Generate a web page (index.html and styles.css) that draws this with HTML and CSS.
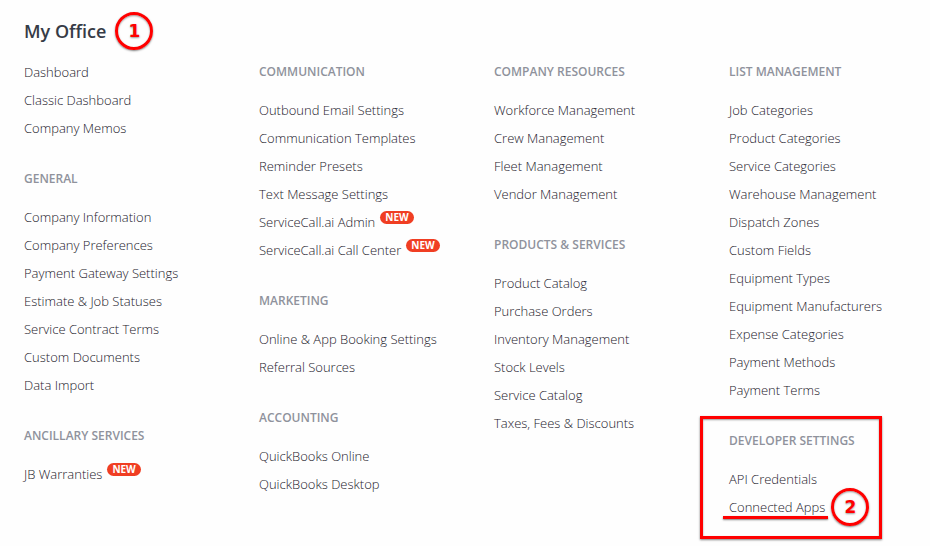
FILE: index.html
```html
<!DOCTYPE html>
<html lang="en">
<head>
  <meta charset="UTF-8">
  <title>My Office</title>
  <link rel="stylesheet" href="styles.css">
</head>
<body>
  <main class="office">
    <header class="title">
      <h1>My Office</h1>
      <span class="step">1</span>
    </header>

    <nav class="columns">
      <div class="column">
        <section class="group">
          <ul>
            <li><a href="#">Dashboard</a></li>
            <li><a href="#">Classic Dashboard</a></li>
            <li><a href="#">Company Memos</a></li>
          </ul>
        </section>
        <section class="group">
          <h2>GENERAL</h2>
          <ul>
            <li><a href="#">Company Information</a></li>
            <li><a href="#">Company Preferences</a></li>
            <li><a href="#">Payment Gateway Settings</a></li>
            <li><a href="#">Estimate &amp; Job Statuses</a></li>
            <li><a href="#">Service Contract Terms</a></li>
            <li><a href="#">Custom Documents</a></li>
            <li><a href="#">Data Import</a></li>
          </ul>
        </section>
        <section class="group">
          <h2>ANCILLARY SERVICES</h2>
          <ul>
            <li><a href="#">JB Warranties</a><span class="badge">NEW</span></li>
          </ul>
        </section>
      </div>

      <div class="column">
        <section class="group">
          <h2>COMMUNICATION</h2>
          <ul>
            <li><a href="#">Outbound Email Settings</a></li>
            <li><a href="#">Communication Templates</a></li>
            <li><a href="#">Reminder Presets</a></li>
            <li><a href="#">Text Message Settings</a></li>
            <li><a href="#">ServiceCall.ai Admin</a><span class="badge">NEW</span></li>
            <li><a href="#">ServiceCall.ai Call Center</a><span class="badge">NEW</span></li>
          </ul>
        </section>
        <section class="group">
          <h2>MARKETING</h2>
          <ul>
            <li><a href="#">Online &amp; App Booking Settings</a></li>
            <li><a href="#">Referral Sources</a></li>
          </ul>
        </section>
        <section class="group">
          <h2>ACCOUNTING</h2>
          <ul>
            <li><a href="#">QuickBooks Online</a></li>
            <li><a href="#">QuickBooks Desktop</a></li>
          </ul>
        </section>
      </div>

      <div class="column">
        <section class="group">
          <h2>COMPANY RESOURCES</h2>
          <ul>
            <li><a href="#">Workforce Management</a></li>
            <li><a href="#">Crew Management</a></li>
            <li><a href="#">Fleet Management</a></li>
            <li><a href="#">Vendor Management</a></li>
          </ul>
        </section>
        <section class="group">
          <h2>PRODUCTS &amp; SERVICES</h2>
          <ul>
            <li><a href="#">Product Catalog</a></li>
            <li><a href="#">Purchase Orders</a></li>
            <li><a href="#">Inventory Management</a></li>
            <li><a href="#">Stock Levels</a></li>
            <li><a href="#">Service Catalog</a></li>
            <li><a href="#">Taxes, Fees &amp; Discounts</a></li>
          </ul>
        </section>
      </div>

      <div class="column">
        <section class="group">
          <h2>LIST MANAGEMENT</h2>
          <ul>
            <li><a href="#">Job Categories</a></li>
            <li><a href="#">Product Categories</a></li>
            <li><a href="#">Service Categories</a></li>
            <li><a href="#">Warehouse Management</a></li>
            <li><a href="#">Dispatch Zones</a></li>
            <li><a href="#">Custom Fields</a></li>
            <li><a href="#">Equipment Types</a></li>
            <li><a href="#">Equipment Manufacturers</a></li>
            <li><a href="#">Expense Categories</a></li>
            <li><a href="#">Payment Methods</a></li>
            <li><a href="#">Payment Terms</a></li>
          </ul>
        </section>
        <section class="group framed">
          <h2>DEVELOPER SETTINGS</h2>
          <ul>
            <li><a href="#">API Credentials</a></li>
            <li class="marked"><a href="#">Connected Apps</a><span class="step">2</span></li>
          </ul>
        </section>
      </div>
    </nav>
  </main>
</body>
</html>
```
FILE: styles.css
```css
body {
  margin: 0;
  background: #fefefe;
  color: #1c202b;
  font-family: "Open Sans", sans-serif;
  font-size: 13px;
  font-weight: 300;
  line-height: 28px;
}
h1, h2, ul {
  margin: 0;
  padding: 0;
}
ul {
  list-style: none;
}
a {
  color: inherit;
  text-decoration: none;
}
.office {
  padding: 12px 24px 0;
}
.title {
  display: flex;
  align-items: center;
  gap: 9px;
  margin-bottom: 8px;
}
h1 {
  color: #363b46;
  font-size: 18px;
  font-weight: 600;
}
.columns {
  display: grid;
  grid-template-columns: repeat(4, minmax(0, 1fr));
  column-gap: 58px;
}
.group {
  margin-bottom: 23px;
}
h2 {
  margin-bottom: 10px;
  color: #8f929c;
  font-size: 12px;
  font-weight: 600;
  white-space: nowrap;
}
li {
  display: flex;
  height: 28px;
  white-space: nowrap;
}
.badge {
  height: 13px;
  margin: 3px 0 0 5px;
  padding: 0 5px;
  border-radius: 7px;
  background: #f03e23;
  color: #fff;
  font-size: 10px;
  font-weight: 700;
  line-height: 13px;
}

/* Numbered callouts */
.step {
  box-sizing: border-box;
  width: 38px;
  height: 38px;
  border: 3px solid #f00;
  border-radius: 50%;
  color: #f00;
  font-family: "DejaVu Sans", sans-serif;
  font-size: 17px;
  font-weight: 700;
  line-height: 33px;
  text-align: center;
  text-shadow: 0 1px 2px rgba(0, 0, 0, 0.4);
  box-shadow: 0 1px 2px rgba(0, 0, 0, 0.5), inset 0 1px 2px rgba(0, 0, 0, 0.4);
}
.framed {
  position: relative;
}
.framed::before {
  content: "";
  position: absolute;
  top: -11px;
  right: 24px;
  bottom: -18px;
  left: -29px;
  border: 3px solid #f00;
  box-shadow: 0 1px 2px rgba(0, 0, 0, 0.5), inset 0 1px 2px rgba(0, 0, 0, 0.4);
  pointer-events: none;
}
.marked {
  position: relative;
  align-items: center;
  gap: 6px;
}
.marked::after {
  content: "";
  position: absolute;
  left: -6px;
  bottom: 2px;
  width: 105px;
  height: 3px;
  background: #f00;
  box-shadow: 0 1px 2px rgba(0, 0, 0, 0.5);
}
```
